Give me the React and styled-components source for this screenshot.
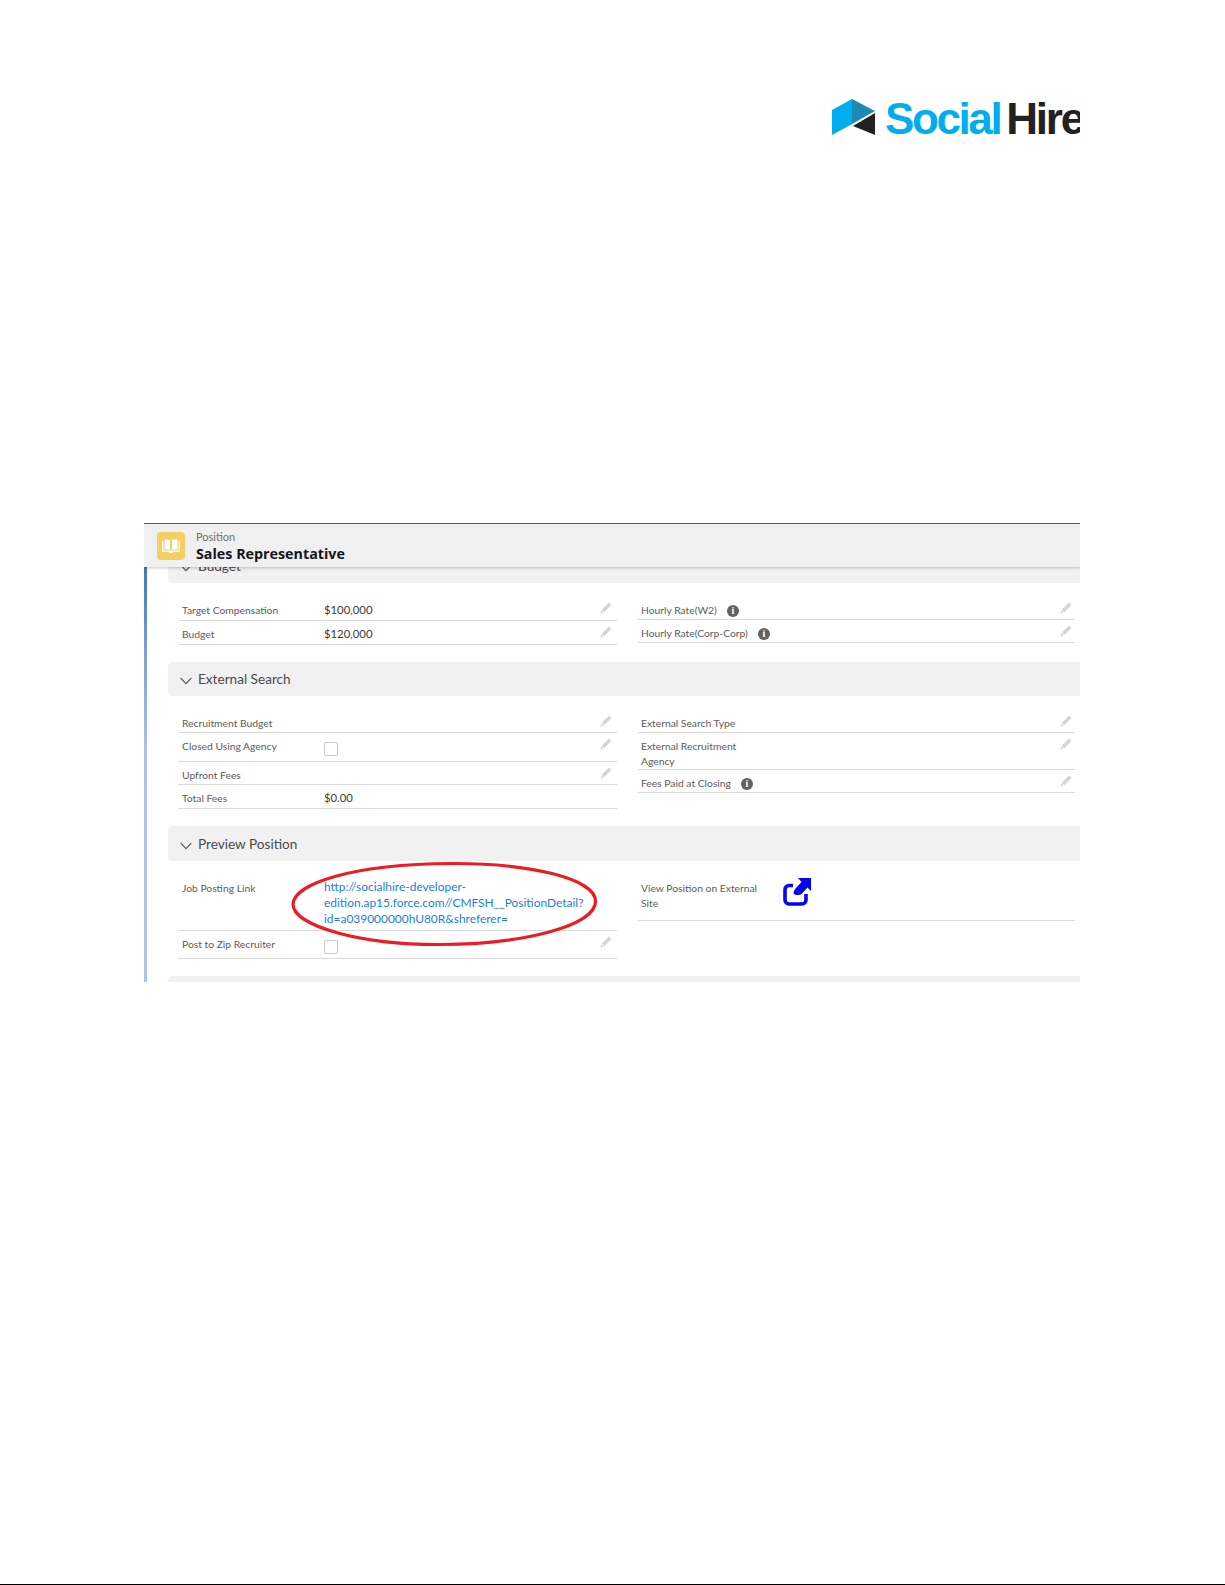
import React from "react";
import styled, { createGlobalStyle } from "styled-components";

const GlobalStyle = createGlobalStyle`
  html, body {
    margin: 0;
    padding: 0;
    background: #fff;
  }
  * {
    box-sizing: border-box;
  }
`;

const Page = styled.div`
  width: 1225px;
  height: 1585px;
  border-bottom: 1px solid #000;
  font-family: "Lato", "Liberation Sans", sans-serif;
  overflow: hidden;
`;

const LogoRow = styled.div`
  display: flex;
  justify-content: flex-end;
  height: 523px;
  padding: 94px 145px 0 0;
`;

const Logo = styled.div`
  display: flex;
  align-items: flex-start;
  width: 248px;
  height: 50px;
  overflow: hidden;
  flex: none;
`;

const LogoSvg = styled.svg`
  flex: none;
  margin-top: 5px;
`;

const LogoWord = styled.span`
  font-family: "Liberation Sans", sans-serif;
  font-weight: 700;
  font-size: 44px;
  line-height: 50px;
  letter-spacing: ${(p) => p.$spacing}px;
  white-space: nowrap;
  margin-left: ${(p) => p.$gap}px;
  color: ${(p) => p.$color};
`;

const Card = styled.div`
  height: 459px;
  margin: 0 145px 0 144px;
  border-top: 1px solid #0a70c8;
  overflow: hidden;
`;

const CardHeader = styled.div`
  position: relative;
  z-index: 1;
  display: flex;
  align-items: center;
  gap: 11px;
  height: 43px;
  padding-left: 13px;
  background: #f0f0f0;
  box-shadow: 0 1px 3px rgba(0, 0, 0, 0.22);
`;

const RecordIcon = styled.div`
  display: flex;
  align-items: center;
  justify-content: center;
  width: 28px;
  height: 28px;
  border-radius: 4px;
  background: #f5cf64;
`;

const HeaderText = styled.div`
  display: flex;
  flex-direction: column;
  padding-top: 2px;
`;

const RecordType = styled.span`
  font-size: 11px;
  line-height: 14px;
  color: #6f6f6f;
`;

const RecordTitle = styled.span`
  margin-top: 1px;
  font-family: "Open Sans", sans-serif;
  font-size: 14.3px;
  line-height: 18px;
  font-weight: 700;
  color: #16161a;
`;

const CardBody = styled.div`
  height: 415px;
  padding-left: 21px;
  border-left: 3px solid;
  border-image: linear-gradient(180deg, #3f7ab8 0%, #7fa3d2 22%, #adc3e5 45%, #b0c5e6 100%) 1;
  overflow: hidden;
`;

const Section = styled.section`
  &:first-child {
    margin-top: -18px;
  }
`;

const SectionHeader = styled.div`
  display: flex;
  align-items: center;
  gap: 6px;
  height: ${(p) => p.$height || 34}px;
  padding-left: 12px;
  border-radius: 4px 0 0 4px;
  background: #f1f1f1;
  font-size: 13.6px;
  color: #4a4a4a;
`;

const SectionBody = styled.div`
  display: grid;
  grid-template-columns: 439px 437px;
  column-gap: 21px;
  padding: 14px 0 17px 10px;
`;

const Column = styled.div`
  display: flex;
  flex-direction: column;
`;

const Row = styled.div`
  position: relative;
  display: grid;
  grid-template-columns: 142px 1fr 20px;
  align-items: start;
  min-height: ${(p) => p.$height}px;
  padding: 5px ${(p) => (p.$right ? 3 : 5)}px 0 ${(p) => (p.$right ? 3 : 4)}px;
  border-bottom: 1px solid #dadada;
`;

const Label = styled.div`
  display: flex;
  align-items: center;
  gap: 10px;
  max-width: 122px;
  margin-top: 1px;
  font-size: 10.3px;
  line-height: 15px;
  color: #5c5c5c;
  white-space: ${(p) => (p.$nowrap ? "nowrap" : "normal")};
`;

const Value = styled.div`
  font-size: 11.3px;
  line-height: 15px;
  color: #3a3a3a;
`;

const LinkValue = styled.a`
  display: block;
  margin-top: -1px;
  font-size: 11.95px;
  line-height: 16px;
  color: #1a7fd4;
  white-space: nowrap;
  text-decoration: none;
`;

const Checkbox = styled.span`
  display: block;
  width: 14px;
  height: 14px;
  margin-top: 4px;
  border: 1px solid #c9c9c9;
  border-radius: 2px;
  background: #fff;
`;

const InfoDot = styled.span`
  display: flex;
  align-items: center;
  justify-content: center;
  flex: none;
  width: 12px;
  height: 12px;
  border-radius: 50%;
  background: #626262;
  color: #fff;
  font-family: "Liberation Serif", serif;
  font-size: 10px;
  font-weight: 700;
  line-height: 12px;
`;

const EditSlot = styled.span`
  display: block;
  justify-self: end;
  width: 12px;
  height: 12px;
  margin-top: -4px;
`;

const ExternalIcon = styled.a`
  display: block;
  width: 28px;
  height: 28px;
  margin-top: -2px;
`;

const ChevronSvg = styled.svg`
  margin-top: 4px;
`;

const Callout = styled.svg`
  position: absolute;
  left: 113px;
  top: -13px;
  overflow: visible;
  pointer-events: none;
`;

const LogoMark = () => (
  <LogoSvg width="44" height="36" viewBox="0 0 44 36">
    <polygon points="0,11 20,0 20,25 0,36" fill="#00aeef" />
    <polygon points="20,0 43,12 20,25" fill="#1b8bb4" />
    <polygon points="43,14 43,36 21,27" fill="#222222" />
  </LogoSvg>
);

const BookIcon = () => (
  <svg width="18" height="16" viewBox="0 0 18 16" fill="#fff">
    <rect x="2.5" y="1.5" width="5.5" height="10" rx="0.6" />
    <rect x="10" y="1.500" width="5.500" height="10" rx="0.6" />
    <path d="M0 3h1.300v9.500h15.400V3H18v10.800h-6.500l-.9 1.200H7.400l-.9-1.200H0z" />
  </svg>
);

const Chevron = () => (
  <ChevronSvg width="12" height="8" viewBox="0 0 12 8" fill="none" stroke="#555" strokeWidth="1.2">
    <path d="M.8 1.200 6 6.600l5.200-5.400" />
  </ChevronSvg>
);

const Pencil = () => (
  <EditSlot>
    <svg width="12" height="12" viewBox="0 0 12 12" fill="#d4d4d4">
      <path d="M9 .6 11.400 3 4.200 10.200 1.800 7.800z" />
      <path d="M1.300 8.500 3.500 10.700.4 11.600z" />
    </svg>
  </EditSlot>
);

const Info = () => <InfoDot>i</InfoDot>;

const ShareIcon = () => (
  <ExternalIcon>
    <svg width="28" height="28" viewBox="0 0 28 28" fill="none">
      <path
        d="M10 7.500H6a4 4 0 0 0-4 4V22a4 4 0 0 0 4 4h13a4 4 0 0 0 4-4v-6"
        stroke="#0505ee"
        strokeWidth="3.6"
      />
      <path
        d="M15 0h13v13l-3.500-3.500-6 6.500c-2 1.500-6 1.500-8-.5 0-2.500 1-4 2.500-5.500l5.500-6z"
        fill="#0505ee"
      />
    </svg>
  </ExternalIcon>
);

const RedCircle = () => (
  <Callout width="306" height="84" viewBox="0 0 306 84">
    <path
      d="M2 42C3 22 60 2 160 1.500C240 1 304 17 304.500 39C305 64 232 82 150 82.500C70 83 2 64 2 42Z"
      fill="none"
      stroke="#ed1c24"
      strokeWidth="3.2"
    />
  </Callout>
);

const App = () => {
  return (
    <Page>
      <GlobalStyle />
      <LogoRow>
        <Logo>
          <LogoMark />
          <LogoWord $color="#00aeef" $gap={9} $spacing={-2.4}>Social</LogoWord>
          <LogoWord $color="#222222" $gap={6} $spacing={-2.2}>Hire</LogoWord>
        </Logo>
      </LogoRow>

      <Card>
        <CardHeader>
          <RecordIcon>
            <BookIcon />
          </RecordIcon>
          <HeaderText>
            <RecordType>Position</RecordType>
            <RecordTitle>Sales Representative</RecordTitle>
          </HeaderText>
        </CardHeader>

        <CardBody>
          <Section>
            <SectionHeader>
              <Chevron />
              Budget
            </SectionHeader>
            <SectionBody>
              <Column>
                <Row $height={24}>
                  <Label $nowrap>Target Compensation</Label>
                  <Value>$100,000</Value>
                  <Pencil />
                </Row>
                <Row $height={24}>
                  <Label>Budget</Label>
                  <Value>$120,000</Value>
                  <Pencil />
                </Row>
              </Column>
              <Column>
                <Row $right $height={23}>
                  <Label $nowrap>Hourly Rate(W2) <Info /></Label>
                  <Value />
                  <Pencil />
                </Row>
                <Row $right $height={23}>
                  <Label $nowrap>Hourly Rate(Corp-Corp) <Info /></Label>
                  <Value />
                  <Pencil />
                </Row>
              </Column>
            </SectionBody>
          </Section>

          <Section>
            <SectionHeader>
              <Chevron />
              External Search
            </SectionHeader>
            <SectionBody>
              <Column>
                <Row $height={23}>
                  <Label $nowrap>Recruitment Budget</Label>
                  <Value />
                  <Pencil />
                </Row>
                <Row $height={29}>
                  <Label $nowrap>Closed Using Agency</Label>
                  <Checkbox />
                  <Pencil />
                </Row>
                <Row $height={23}>
                  <Label>Upfront Fees</Label>
                  <Value />
                  <Pencil />
                </Row>
                <Row $height={24}>
                  <Label>Total Fees</Label>
                  <Value>$0.00</Value>
                </Row>
              </Column>
              <Column>
                <Row $right $height={23}>
                  <Label $nowrap>External Search Type</Label>
                  <Value />
                  <Pencil />
                </Row>
                <Row $right $height={37}>
                  <Label>External Recruitment Agency</Label>
                  <Value />
                  <Pencil />
                </Row>
                <Row $right $height={23}>
                  <Label $nowrap>Fees Paid at Closing <Info /></Label>
                  <Value />
                  <Pencil />
                </Row>
              </Column>
            </SectionBody>
          </Section>

          <Section>
            <SectionHeader $height={35}>
              <Chevron />
              Preview Position
            </SectionHeader>
            <SectionBody>
              <Column>
                <Row $height={56}>
                  <Label $nowrap>Job Posting Link</Label>
                  <LinkValue>
                    http://socialhire-developer-
                    <br />
                    edition.ap15.force.com//CMFSH__PositionDetail?
                    <br />
                    id=a039000000hU80R&amp;shreferer=
                  </LinkValue>
                  <RedCircle />
                </Row>
                <Row $height={28}>
                  <Label $nowrap>Post to Zip Recruiter</Label>
                  <Checkbox />
                  <Pencil />
                </Row>
              </Column>
              <Column>
                <Row $right $height={46}>
                  <Label>View Position on External Site</Label>
                  <ShareIcon />
                </Row>
              </Column>
            </SectionBody>
          </Section>

          <Section>
            <SectionHeader />
          </Section>
        </CardBody>
      </Card>
    </Page>
  );
};

export default App;
